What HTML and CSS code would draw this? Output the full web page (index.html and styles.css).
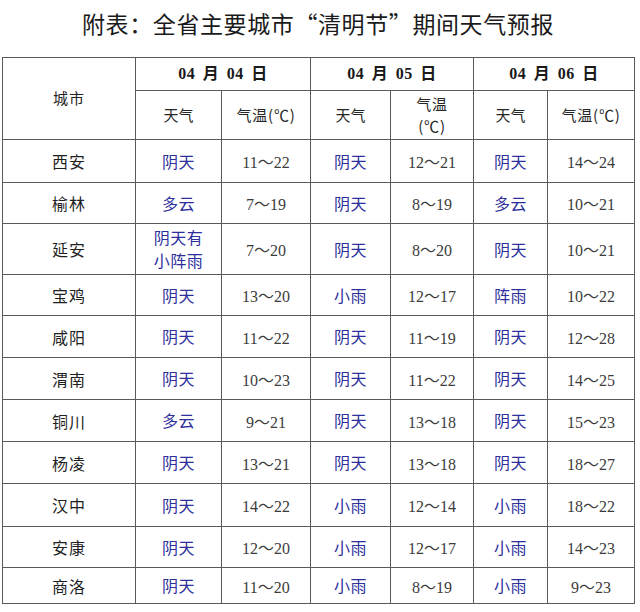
FILE: index.html
```html
<!DOCTYPE html>
<html lang="zh-CN">
<head>
<meta charset="utf-8">
<title>附表</title>
<link rel="stylesheet" href="styles.css">
</head>
<body>
<div class="page">
  <h1 class="title">附表：全省主要城市“清明节”期间天气预报</h1>
  <div class="wrap">
    <table class="forecast">
      <colgroup>
        <col class="c-city"><col class="c1w"><col class="c1t"><col class="c2w"><col class="c2t"><col class="c3w"><col class="c3t">
      </colgroup>
      <thead>
        <tr class="h-date">
          <th rowspan="2" class="city-head">城市</th>
          <th colspan="2" class="date">04 月 04 日</th>
          <th colspan="2" class="date">04 月 05 日</th>
          <th colspan="2" class="date">04 月 06 日</th>
        </tr>
        <tr class="h-sub">
          <th>天气</th><th class="temp-head">气温(℃)</th>
          <th>天气</th><th class="temp-head">气温<br>(℃)</th>
          <th>天气</th><th class="temp-head">气温(℃)</th>
        </tr>
      </thead>
      <tbody>
        <tr class="r43"><td class="city">西安</td><td class="wx">阴天</td><td class="t">11～22</td><td class="wx">阴天</td><td class="t">12～21</td><td class="wx">阴天</td><td class="t">14～24</td></tr>
        <tr class="r41"><td class="city">榆林</td><td class="wx">多云</td><td class="t">7～19</td><td class="wx">阴天</td><td class="t">8～19</td><td class="wx">多云</td><td class="t">10～21</td></tr>
        <tr class="r51"><td class="city">延安</td><td class="wx">阴天有<br>小阵雨</td><td class="t">7～20</td><td class="wx">阴天</td><td class="t">8～20</td><td class="wx">阴天</td><td class="t">10～21</td></tr>
        <tr class="r41"><td class="city">宝鸡</td><td class="wx">阴天</td><td class="t">13～20</td><td class="wx">小雨</td><td class="t">12～17</td><td class="wx">阵雨</td><td class="t">10～22</td></tr>
        <tr class="r42"><td class="city">咸阳</td><td class="wx">阴天</td><td class="t">11～22</td><td class="wx">阴天</td><td class="t">11～19</td><td class="wx">阴天</td><td class="t">12～28</td></tr>
        <tr class="r42"><td class="city">渭南</td><td class="wx">阴天</td><td class="t">10～23</td><td class="wx">阴天</td><td class="t">11～22</td><td class="wx">阴天</td><td class="t">14～25</td></tr>
        <tr class="r42"><td class="city">铜川</td><td class="wx">多云</td><td class="t">9～21</td><td class="wx">阴天</td><td class="t">13～18</td><td class="wx">阴天</td><td class="t">15～23</td></tr>
        <tr class="r42"><td class="city">杨凌</td><td class="wx">阴天</td><td class="t">13～21</td><td class="wx">阴天</td><td class="t">13～18</td><td class="wx">阴天</td><td class="t">18～27</td></tr>
        <tr class="r43"><td class="city">汉中</td><td class="wx">阴天</td><td class="t">14～22</td><td class="wx">小雨</td><td class="t">12～14</td><td class="wx">小雨</td><td class="t">18～22</td></tr>
        <tr class="r41"><td class="city">安康</td><td class="wx">阴天</td><td class="t">12～20</td><td class="wx">小雨</td><td class="t">12～17</td><td class="wx">小雨</td><td class="t">14～23</td></tr>
        <tr class="r36"><td class="city">商洛</td><td class="wx">阴天</td><td class="t">11～20</td><td class="wx">小雨</td><td class="t">8～19</td><td class="wx">小雨</td><td class="t">9～23</td></tr>
      </tbody>
    </table>
  </div>
</div>
</body>
</html>
```

FILE: styles.css
```css
html, body {
  margin: 0;
  padding: 0;
  background: #ffffff;
}

body {
  font-family: "Liberation Serif", "Noto Sans CJK SC", serif;
  color: #222222;
}

.page {
  width: 640px;
}

.title {
  margin: 0;
  height: 57px;
  box-sizing: border-box;
  padding: 8px 4px 0 0;
  line-height: 30px;
  font-size: 23px;
  font-weight: 400;
  letter-spacing: 0.6px;
  text-align: center;
  font-family: "Noto Sans CJK SC", sans-serif;
  color: #1a1a1a;
}

.wrap {
  padding-left: 2px;
}

.forecast {
  border-collapse: collapse;
  table-layout: fixed;
  width: 633px;
  border: 1px solid #3a3a3a;
}

.c-city { width: 133px; }
.c1w { width: 86px; }
.c1t { width: 89px; }
.c2w { width: 80px; }
.c2t { width: 83px; }
.c3w { width: 74px; }
.c3t { width: 87px; }

.forecast th,
.forecast td {
  border: 1px solid #5a5a5a;
  padding: 0;
  text-align: center;
  vertical-align: middle;
  font-weight: 400;
  font-size: 16px;
  white-space: nowrap;
}

.forecast th {
  font-family: "Noto Sans CJK SC", sans-serif;
  font-size: 15px;
  color: #262626;
  line-height: 22px;
}

.forecast th.temp-head {
  letter-spacing: 0.8px;
}

.h-date th { height: 32px; }
.h-sub th { height: 48px; }

.forecast th.date {
  font-family: "Liberation Serif", "Noto Sans CJK SC", serif;
  font-weight: 700;
  font-size: 16px;
  color: #1a1a1a;
  word-spacing: 3px;
  letter-spacing: 0.5px;
}

.forecast th.city-head {
  padding-bottom: 2px;
  letter-spacing: 1px;
}

.city {
  font-family: "Noto Sans CJK SC", sans-serif;
  color: #1f1f1f;
  letter-spacing: 1px;
}

.wx {
  font-family: "Noto Sans CJK SC", sans-serif;
  color: #2d2f9c;
  line-height: 23px;
  letter-spacing: 0.5px;
}

.t {
  color: #3c3c3c;
  font-size: 16px;
}

.r36 td { height: 35px; }
.r41 td { height: 40px; }
.r42 td { height: 41px; }
.r43 td { height: 42px; }
.r51 td { height: 50px; }
```
